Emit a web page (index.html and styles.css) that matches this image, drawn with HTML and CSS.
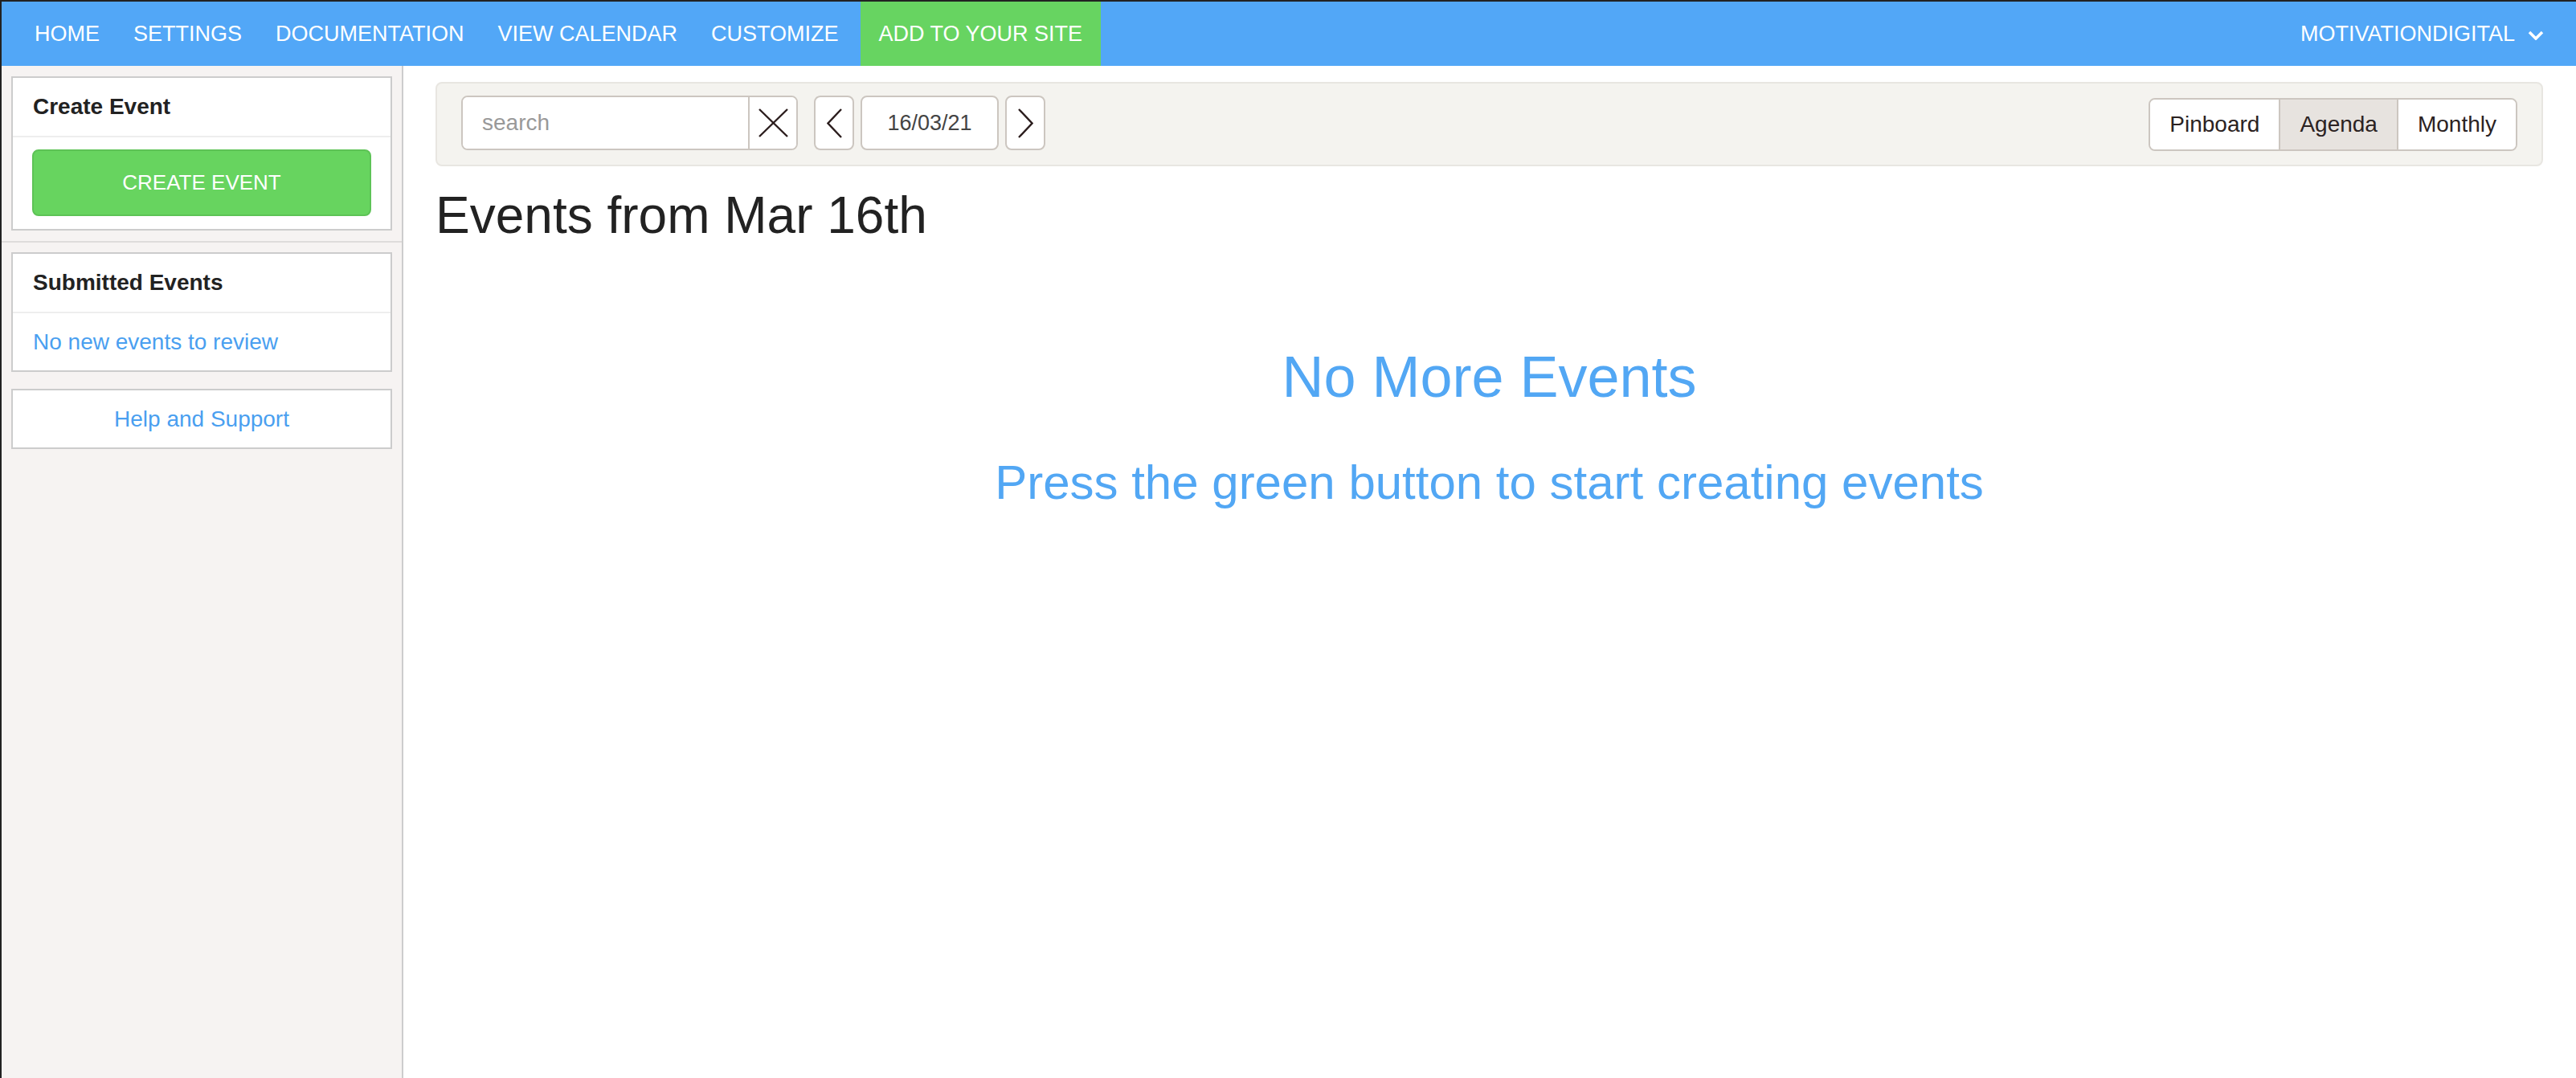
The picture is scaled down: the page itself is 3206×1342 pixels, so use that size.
FILE: index.html
```html
<!DOCTYPE html>
<html lang="en">
  <head>
    <meta charset="UTF-8" />
    <meta name="viewport" content="width=device-width, initial-scale=1.0" />
    <title>Events</title>
    <link rel="stylesheet" href="styles.css">
  </head>
  <body>
    <nav class="topbar">
      <ul class="menu">
        <li><a href="#">HOME</a></li>
        <li><a href="#">SETTINGS</a></li>
        <li><a href="#">DOCUMENTATION</a></li>
        <li><a href="#">VIEW CALENDAR</a></li>
        <li><a href="#">CUSTOMIZE</a></li>
        <li class="menu-add"><a href="#">ADD TO YOUR SITE</a></li>
      </ul>
      <div class="account">
        <span>MOTIVATIONDIGITAL</span>
        <svg width="20" height="12" viewBox="0 0 20 12">
          <polyline points="2,2 10,10 18,2" fill="none" stroke="#fff" stroke-width="3.5" />
        </svg>
      </div>
    </nav>

    <div class="layout">
      <aside class="sidebar">
        <div class="side-top">
          <section class="panel">
            <div class="panel-head">Create Event</div>
            <div class="panel-body">
              <button class="btn-create">CREATE EVENT</button>
            </div>
          </section>
        </div>
        <div class="side-rest">
          <section class="panel">
            <div class="panel-head">Submitted Events</div>
            <div class="panel-note">No new events to review</div>
          </section>
          <a class="panel panel-help" href="#">Help and Support</a>
        </div>
      </aside>

      <main class="content">
        <div class="toolbar">
          <div class="search-group">
            <input class="search-input" type="text" placeholder="search" />
            <button class="search-clear">
              <svg width="37" height="36" viewBox="0 0 37 36">
                <line x1="1" y1="1" x2="36" y2="35" stroke="#2b1d1d" stroke-width="2.4" />
                <line x1="36" y1="1" x2="1" y2="35" stroke="#2b1d1d" stroke-width="2.4" />
              </svg>
            </button>
          </div>
          <button class="nav-btn nav-prev">
            <svg width="19" height="37" viewBox="0 0 19 37">
              <polyline points="18,1 1.5,18.5 18,36" fill="none" stroke="#2b1d1d" stroke-width="2.4" />
            </svg>
          </button>
          <div class="date-field">16/03/21</div>
          <button class="nav-btn">
            <svg width="19" height="37" viewBox="0 0 19 37">
              <polyline points="1,1 17.5,18.5 1,36" fill="none" stroke="#2b1d1d" stroke-width="2.4" />
            </svg>
          </button>
          <div class="view-switch">
            <button>Pinboard</button>
            <button class="active">Agenda</button>
            <button>Monthly</button>
          </div>
        </div>

        <h1 class="day-title">Events from Mar 16th</h1>

        <div class="empty">
          <h2 class="empty-title">No More Events</h2>
          <p class="empty-text">Press the green button to start creating events</p>
        </div>
      </main>
    </div>
  </body>
</html>
```

FILE: styles.css
```css
* {
  box-sizing: border-box;
}
html {
  background: #222;
}
body {
  margin: 2px 0 0 2px;
  height: calc(100vh - 2px);
  display: flex;
  flex-direction: column;
  overflow: hidden;
  background: #fff;
  font-family: "Liberation Sans", Arial, sans-serif;
}

/* top navigation */
.topbar {
  height: 80px;
  flex: none;
  display: flex;
  justify-content: space-between;
  background: #52a7f7;
  color: #fff;
  font-size: 27px;
  padding: 0 40px 0 20px;
}
.menu {
  list-style: none;
  margin: 0;
  padding: 0;
  display: flex;
}
.menu a {
  display: flex;
  align-items: center;
  height: 100%;
  padding: 0 21px;
  color: #fff;
  text-decoration: none;
}
.menu-add {
  margin-left: 6px;
}
.menu-add a {
  background: #67d461;
  padding: 0 23px;
}
.account {
  display: flex;
  align-items: center;
  gap: 16px;
}
.account svg {
  margin-top: 3px;
}

/* page body */
.layout {
  flex: 1;
  display: flex;
  min-height: 0;
}
.sidebar {
  width: 500px;
  flex: none;
  background: #f6f3f2;
  border-right: 2px solid #cdcdcd;
}
.side-top {
  padding: 13px 12px;
  border-bottom: 2px solid #dedcdb;
}
.side-rest {
  padding: 12px;
  display: flex;
  flex-direction: column;
  gap: 21px;
}
.panel {
  background: #fff;
  border: 2px solid #ccc;
}
.panel-head {
  height: 74px;
  display: flex;
  align-items: center;
  padding: 0 25px;
  border-bottom: 2px solid #eee;
  font-size: 28px;
  font-weight: bold;
  color: #222;
}
.panel-body {
  padding: 15px 24px 16px;
}
.btn-create {
  width: 100%;
  height: 83px;
  background: #67d45f;
  border: 2px solid #5dc356;
  border-radius: 8px;
  color: #fff;
  font: 26px "Liberation Sans", Arial, sans-serif;
}
.panel-note {
  height: 71px;
  display: flex;
  align-items: center;
  padding: 0 25px;
  font-size: 28px;
  color: #4a9ff0;
}
.panel-help {
  height: 75px;
  display: flex;
  align-items: center;
  justify-content: center;
  font-size: 28px;
  color: #4a9ff0;
  text-decoration: none;
}

/* main area */
.content {
  flex: 1;
  padding: 20px 41px 0 40px;
}
.toolbar {
  display: flex;
  align-items: center;
  padding: 14px 30px 17px;
  background: #f4f3ef;
  border: 2px solid #e8e6e1;
  border-radius: 8px;
}
.search-group {
  display: flex;
  width: 419px;
  height: 68px;
  background: #fff;
  border: 2px solid #ccc6c0;
  border-radius: 8px;
  overflow: hidden;
}
.search-input {
  flex: 1;
  min-width: 0;
  border: none;
  border-right: 2px solid #ccc6c0;
  padding: 0 24px;
  outline: none;
  font: 28px "Liberation Sans", Arial, sans-serif;
  color: #333;
}
.search-input::placeholder {
  color: #999;
}
.search-clear {
  width: 58px;
  display: flex;
  align-items: center;
  justify-content: center;
  padding: 0;
  border: none;
  background: #fff;
}
.nav-btn {
  width: 50px;
  height: 68px;
  display: flex;
  align-items: center;
  justify-content: center;
  padding: 0;
  background: #fff;
  border: 2px solid #ccc6c0;
  border-radius: 8px;
}
.nav-prev {
  margin-left: 20px;
}
.date-field {
  width: 172px;
  height: 68px;
  margin: 0 8px;
  display: flex;
  align-items: center;
  justify-content: center;
  background: #fff;
  border: 2px solid #ccc6c0;
  border-radius: 8px;
  font-size: 27px;
  color: #444;
}
.view-switch {
  margin-left: auto;
  margin-top: 4px;
  display: flex;
  height: 66px;
  border: 2px solid #ccc6c0;
  border-radius: 8px;
  overflow: hidden;
}
.view-switch button {
  padding: 0 24px;
  border: none;
  border-left: 2px solid #ccc6c0;
  background: #fff;
  font: 28px "Liberation Sans", Arial, sans-serif;
  color: #2b2222;
}
.view-switch button:first-child {
  border-left: none;
}
.view-switch .active {
  background: #e7e3df;
}
.day-title {
  margin: 26px 0 0;
  font-size: 64px;
  line-height: 70px;
  font-weight: normal;
  color: #222;
}
.empty {
  text-align: center;
  color: #52a7f4;
}
.empty-title {
  margin: 126px 0 0;
  font-size: 72px;
  line-height: 80px;
  font-weight: normal;
}
.empty-text {
  margin: 59px 0 0;
  font-size: 60px;
  line-height: 66px;
}
```
